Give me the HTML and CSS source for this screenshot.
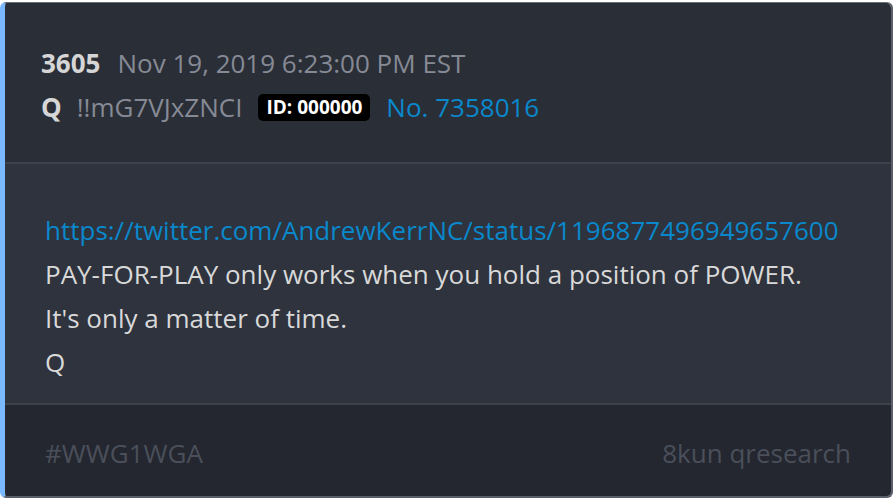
FILE: index.html
```html
<!DOCTYPE html>
<html>
<head>
<meta charset="utf-8">
<link rel="stylesheet" href="styles.css">
</head>
<body>
<div class="card">
  <div class="head">
    <div class="row"><span class="num">3605</span><span class="date">Nov 19, 2019 6:23:00 PM EST</span></div>
    <div class="row"><span class="num q">Q</span><span class="trip">!!mG7VJxZNCI</span><span class="badge">ID: 000000</span><span class="no">No. 7358016</span></div>
  </div>
  <div class="body">
    <div class="line link">https://twitter.com/AndrewKerrNC/status/1196877496949657600</div>
    <div class="line">PAY-FOR-PLAY only works when you hold a position of POWER.</div>
    <div class="line">It's only a matter of time.</div>
    <div class="line">Q</div>
  </div>
  <div class="foot">
    <span>#WWG1WGA</span>
    <span>8kun qresearch</span>
  </div>
</div>
</body>
</html>
```
FILE: styles.css
```css
html, body {
  margin: 0;
  padding: 0;
  background: #ffffff;
}
body {
  padding: 2px 1px 0 0;
  font-family: "Open Sans", sans-serif;
  font-size: 26px;
}
.card {
  border-top: 1px solid #6a6e78;
  border-right: 2px solid #5a5f69;
  border-bottom: 2px solid #5a5f69;
  border-left: 5px solid #7ab8ff;
  border-radius: 6px;
  overflow: hidden;
  height: 496px;
  box-sizing: border-box;
  display: flex;
  flex-direction: column;
}
.head {
  background: #2a2e37;
  padding: 38px 36px 0;
  height: 161px;
  flex: none;
  box-sizing: border-box;
  border-bottom: 2px solid #3c414b;
}
.row {
  display: flex;
  align-items: center;
  height: 44px;
}
.num {
  font-weight: 700;
  color: #d6d6d6;
  margin-right: 17px;
}
.num.q { margin-right: 15px; }
.date, .trip {
  color: #868a95;
}
.trip { margin-right: 16px; }
.badge {
  background: #000;
  color: #fff;
  font-weight: 700;
  font-size: 19px;
  padding: 0 8px;
  height: 27px;
  line-height: 27px;
  border-radius: 5px;
  margin-right: 16px;
}
.no { color: #0a88cc; }
.body {
  background: #2e333d;
  padding: 44px 40px 0;
  height: 241px;
  flex: none;
  box-sizing: border-box;
  border-bottom: 2px solid #3c414b;
}
.line {
  height: 44px;
  line-height: 44px;
  color: #d9d9d9;
  white-space: nowrap;
}
.link { color: #0a88cc; }
.foot {
  flex: 1;
  background: #242730;
  display: flex;
  justify-content: space-between;
  align-items: center;
  padding: 4px 40px 0;
  color: #4a4f5a;
}
```
